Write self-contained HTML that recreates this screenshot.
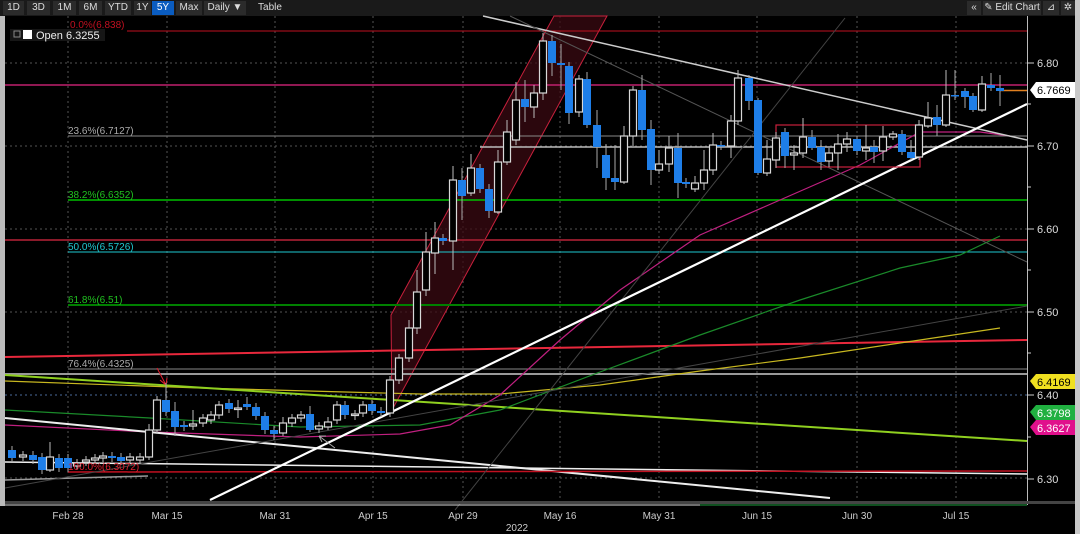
<!DOCTYPE html>
<html><head><meta charset="utf-8"><style>
html,body{margin:0;padding:0;background:#000;width:1080px;height:534px;overflow:hidden;font-family:"Liberation Sans",sans-serif}
#top{position:absolute;left:0;top:0;width:1075px;height:16px;background:#1a1a1a}
.b{position:absolute;top:1px;height:14px;background:#2b2b2b;color:#ddd;font-size:10px;line-height:14px;text-align:center}
#rg{position:absolute;left:1075px;top:0;width:5px;height:534px;background:#c8c8c8}
#lg{position:absolute;left:0;top:16px;width:5px;height:490px;background:#bbb}
svg{position:absolute;left:0;top:0}
</style></head><body>
<div id="top">
<div class="b" style="left:3px;width:21px">1D</div>
<div class="b" style="left:27px;width:23px">3D</div>
<div class="b" style="left:53px;width:23px">1M</div>
<div class="b" style="left:79px;width:23px">6M</div>
<div class="b" style="left:105px;width:26px">YTD</div>
<div class="b" style="left:134px;width:17px">1Y</div>
<div class="b" style="left:152px;width:22px;background:#0a5cc0;color:#fff">5Y</div>
<div class="b" style="left:176px;width:26px">Max</div>
<div class="b" style="left:204px;width:42px">Daily ▼</div>
<div class="b" style="left:249px;width:42px;background:#1a1a1a">Table</div>
<div class="b" style="left:967px;width:14px">«</div>
<div class="b" style="left:983px;width:58px">✎ Edit Chart</div>
<div class="b" style="left:1043px;width:16px">⊿</div>
<div class="b" style="left:1061px;width:14px">✲</div>
</div>
<div id="rg"></div><div id="lg"></div>
<svg width="1080" height="534" id="s" xmlns="http://www.w3.org/2000/svg">
<g id="grid" stroke="#555" stroke-dasharray="2,3" stroke-width="1">
<line x1="5" y1="63" x2="1027" y2="63"/><line x1="5" y1="146" x2="1027" y2="146"/><line x1="5" y1="229" x2="1027" y2="229"/><line x1="5" y1="312" x2="1027" y2="312"/><line x1="5" y1="478" x2="1027" y2="478"/>
<line x1="5" y1="395" x2="1027" y2="395" stroke="#4a6a9a"/>
</g>
<g id="vg" stroke="#555" stroke-dasharray="2,3"></g>
<polygon points="391,315 554,16 607,16 392,410" fill="#3a0a12" fill-opacity="0.75" stroke="#c8203c" stroke-width="1"/>
<g fill="none">
<line x1="127" y1="31" x2="1027" y2="31" stroke="#c01020"/>
<line x1="5" y1="85" x2="1027" y2="85" stroke="#c0206e" stroke-width="1.5"/>
<line x1="68" y1="136" x2="1027" y2="136" stroke="#888"/>
<line x1="480" y1="147" x2="1027" y2="147" stroke="#bbb" stroke-width="1.5"/>
<line x1="68" y1="200" x2="1027" y2="200" stroke="#00c000" stroke-width="1.5"/>
<line x1="5" y1="240" x2="1027" y2="240" stroke="#8b1a2a" stroke-width="2"/>
<line x1="68" y1="252" x2="1027" y2="252" stroke="#1ec8d0"/>
<line x1="68" y1="305" x2="1027" y2="305" stroke="#008000" stroke-width="2"/>
<line x1="5" y1="357" x2="1027" y2="340" stroke="#e8283c" stroke-width="2"/>
<line x1="68" y1="369" x2="1027" y2="369" stroke="#888"/>
<line x1="5" y1="374" x2="1027" y2="374" stroke="#999" stroke-width="2"/>
<polyline points="5,381 200,388 420,394 500,394 600,385 700,371 800,358 900,343 1000,328" stroke="#c8b820" stroke-width="1.2"/>
<line x1="5" y1="375" x2="1027" y2="441" stroke="#90d020" stroke-width="2"/>
<polyline points="5,410 150,418 300,427 420,425 500,410 600,372 700,335 800,300 900,268 960,255 1000,236" stroke="#1a8a2a" stroke-width="1.2"/>
<polyline points="5,425 150,432 300,437 400,434 450,425 500,395 560,340 620,290 700,235 780,200 860,165 920,132 980,132 1010,136" stroke="#c02080" stroke-width="1.2"/>
<line x1="5" y1="418" x2="830" y2="498" stroke="#eee" stroke-width="2"/>
<line x1="5" y1="462" x2="1027" y2="474" stroke="#eee" stroke-width="1.5"/>
<line x1="68" y1="472" x2="1027" y2="471" stroke="#c01020" stroke-width="1.5"/>
<line x1="5" y1="480" x2="148" y2="476" stroke="#999" stroke-width="1.5"/>
<line x1="5" y1="488" x2="1027" y2="306" stroke="#444"/>
<line x1="483" y1="16" x2="1027" y2="140" stroke="#ccc" stroke-width="1.5"/>
<line x1="510" y1="16" x2="1027" y2="262" stroke="#555"/>
<line x1="455" y1="510" x2="845" y2="18" stroke="#444"/>
<line x1="210" y1="500" x2="1027" y2="104" stroke="#fff" stroke-width="2.2"/>
<rect x="776" y="125" width="144" height="42" stroke="#c8203c" stroke-width="1.2"/>
<line x1="1000" y1="90.5" x2="1027" y2="90.5" stroke="#e08020" stroke-width="1.5"/>
<path d="M157,368 L166,385 M160,380 L166,385 L167,378" stroke="#e02030"/>
<path d="M335,448 L319,436 M319,436 L326,436 M319,436 L322,442" stroke="#aaa"/>
</g>
<g id="c"></g>
<rect x="10" y="29" width="95" height="12" fill="#161616"/>
<rect x="14" y="31" width="6" height="6" fill="none" stroke="#888"/>
<rect x="23" y="30" width="9" height="9" fill="#fff"/>
<text x="36" y="39" fill="#eee" font-size="11">Open 6.3255</text>
<g font-size="10" font-family="Liberation Sans,sans-serif">
<text x="70" y="28" fill="#c01020">0.0%(6.838)</text>
<text x="68" y="134" fill="#aaa">23.6%(6.7127)</text>
<text x="68" y="198" fill="#20c020">38.2%(6.6352)</text>
<text x="68" y="250" fill="#20c8d0">50.0%(6.5726)</text>
<text x="68" y="303" fill="#20c020">61.8%(6.51)</text>
<text x="68" y="367" fill="#aaa">76.4%(6.4325)</text>
<text x="68" y="470" fill="#e02030">100.0%(6.3072)</text>
</g>
<line x1="1027.5" y1="16" x2="1027.5" y2="505" stroke="#bbb"/>
<g id="ax" fill="#ddd" font-size="11"></g>
<polygon points="1030,90 1036,82 1075,82 1075,98 1036,98" fill="#fff"/><text x="1037" y="94" fill="#000" font-size="11">6.7669</text>
<polygon points="1030,381 1036,374 1075,374 1075,389 1036,389" fill="#f0e020"/><text x="1037" y="386" fill="#000" font-size="11">6.4169</text>
<polygon points="1030,412 1036,405 1075,405 1075,420 1036,420" fill="#20b040"/><text x="1037" y="417" fill="#fff" font-size="11">6.3798</text>
<polygon points="1030,427 1036,420 1075,420 1075,435 1036,435" fill="#e0108c"/><text x="1037" y="432" fill="#fff" font-size="11">6.3627</text>
<rect x="5" y="501" width="1070" height="3" fill="#444"/>
<line x1="5" y1="505" x2="1027" y2="505" stroke="#ddd"/>
<line x1="700" y1="505" x2="1027" y2="505" stroke="#20a040"/>
<g id="xl" fill="#ccc" font-size="10" text-anchor="middle"></g>
<text x="517" y="531" fill="#ccc" font-size="10" text-anchor="middle">2022</text>
</svg>
<script>
var N="http://www.w3.org/2000/svg";
function el(p,t,a,tx){var e=document.createElementNS(N,t);for(var k in a)e.setAttribute(k,a[k]);if(tx)e.textContent=tx;p.appendChild(e);return e;}
var vx=[68,167,275,373,463,560,659,757,857,956],lb=["Feb 28","Mar 15","Mar 31","Apr 15","Apr 29","May 16","May 31","Jun 15","Jun 30","Jul 15"];
var vg=document.getElementById('vg'),xl=document.getElementById('xl');
vx.forEach(function(x,i){el(vg,'line',{x1:x,y1:16,x2:x,y2:500});el(xl,'text',{x:x,y:519},lb[i]);});
var ax=document.getElementById('ax');
[[63,"6.80"],[146,"6.70"],[229,"6.60"],[312,"6.50"],[395,"6.40"],[479,"6.30"]].forEach(function(a){el(ax,'text',{x:1037,y:a[0]+4},a[1]);el(ax,'line',{x1:1027,y1:a[0],x2:1034,y2:a[0],stroke:'#ccc'});});
[104,187,270,353,437].forEach(function(y){el(ax,'line',{x1:1027,y1:y,x2:1031,y2:y,stroke:'#ccc'});});
var C=[[12,450,458,0],[23,455,457,1],[33,455,460,0],[42,457,470,0],[50,457,470,1,442,472],[59,458,468,0],[68,458,468,0],[77,463,466,1],[86,460,462,1],[95,458,460,1],[103,456,458,1],[112,456,458,0],[121,457,461,0],[130,457,460,1],[140,457,460,1],
[149,430,457,1,424,460],[157,400,430,1],[166,400,412,0,383,416],[175,411,427,0,402,436],[184,425,427,0],[193,424,426,1,410,430],[203,418,423,1],[211,415,420,1],[219,405,415,1],[229,403,409,0],[238,408,409,1,400,418],[247,404,407,0,397,410],[256,407,416,0],[265,416,430,0],[274,430,434,0,426,440],[283,423,433,1,417,436],[292,418,423,1],[301,415,418,1],[310,414,430,0,406,432],[319,426,429,1],[328,422,427,1,417,430],[337,405,420,1],[345,405,415,0],[355,414,415,1,410,420],[363,405,413,1],[372,404,411,0],[381,411,413,0],
[390,380,413,1],[399,358,380,1],[409,328,358,1,320,362],[417,292,328,1,270,334],[426,252,290,1,232,296],[435,238,253,1,222,274],[443,238,241,0],[453,180,241,1,166,270],[462,180,196,0,168,220],[471,168,193,1,154,196],[480,168,189,0],[489,189,211,0,184,218],[498,162,212,1,150,214],[507,132,162,1,120,165],[516,100,140,1,82,145],[525,99,107,0,80,122],[534,93,107,1,85,118],[543,41,93,1,33,100],[552,41,63,0,35,76],[561,63,65,0,44,90],[569,66,113,0,62,124],[579,79,112,1,75,117],[587,79,125,0,72,128],[597,125,147,0,110,168],[606,155,178,0,144,190],[615,178,182,0,145,190],[624,136,182,1,126,184],[633,90,136,1,86,146],[642,90,130,0,75,140],[651,129,170,0,120,185],[659,164,170,1,150,174],[669,148,164,1,136,172],[678,148,183,0,133,198],[686,182,184,0],[695,183,189,1,176,192],[704,170,183,1,150,190],[713,145,170,1,133,175],[721,145,146,0],[731,121,146,1,115,158],[738,78,121,1,70,125],[749,78,101,0,75,110],[758,100,173,0,98,175],[767,159,173,1,140,176],[776,138,160,1,132,168],[785,132,156,0,128,168],[794,153,155,1,145,170],[803,137,153,1,118,158],[812,137,148,0,130,150],[821,147,162,0,140,170],[829,153,161,1,148,167],[838,144,153,1,134,170],[847,139,144,1,132,152],[857,139,151,0,136,155],[866,148,151,1,125,160],[874,147,152,0,140,163],[883,137,151,1,126,161],[893,134,137,1,131,140],[902,134,152,0,130,155],[911,152,158,0,140,160],[919,125,157,1,120,160],[928,118,126,1,102,128],[937,117,125,0,105,136],[946,95,125,1,70,127],[955,95,96,0,70,100],[965,91,97,0,88,108],[973,96,110,0,93,112],[982,84,110,1,76,112],[991,85,88,0,73,91],[1000,88,91,0,75,106]];
var g=document.getElementById('c');
C.forEach(function(c){var wt=c[4]||c[1]-4,wb=c[5]||c[2]+4;var col=c[3]?'#d8d8d8':'#1e7ee8';
el(g,'line',{x1:c[0],y1:wt,x2:c[0],y2:wb,stroke:c[3]?'#bbb':'#aaa'});
var h=Math.max(c[2]-c[1],1.5);
if(c[3])el(g,'rect',{x:c[0]-3.5,y:c[1],width:7,height:h,fill:'#000',stroke:col,'stroke-width':1.2});
else el(g,'rect',{x:c[0]-4,y:c[1],width:8,height:h,fill:col});});
</script>
</body></html>
